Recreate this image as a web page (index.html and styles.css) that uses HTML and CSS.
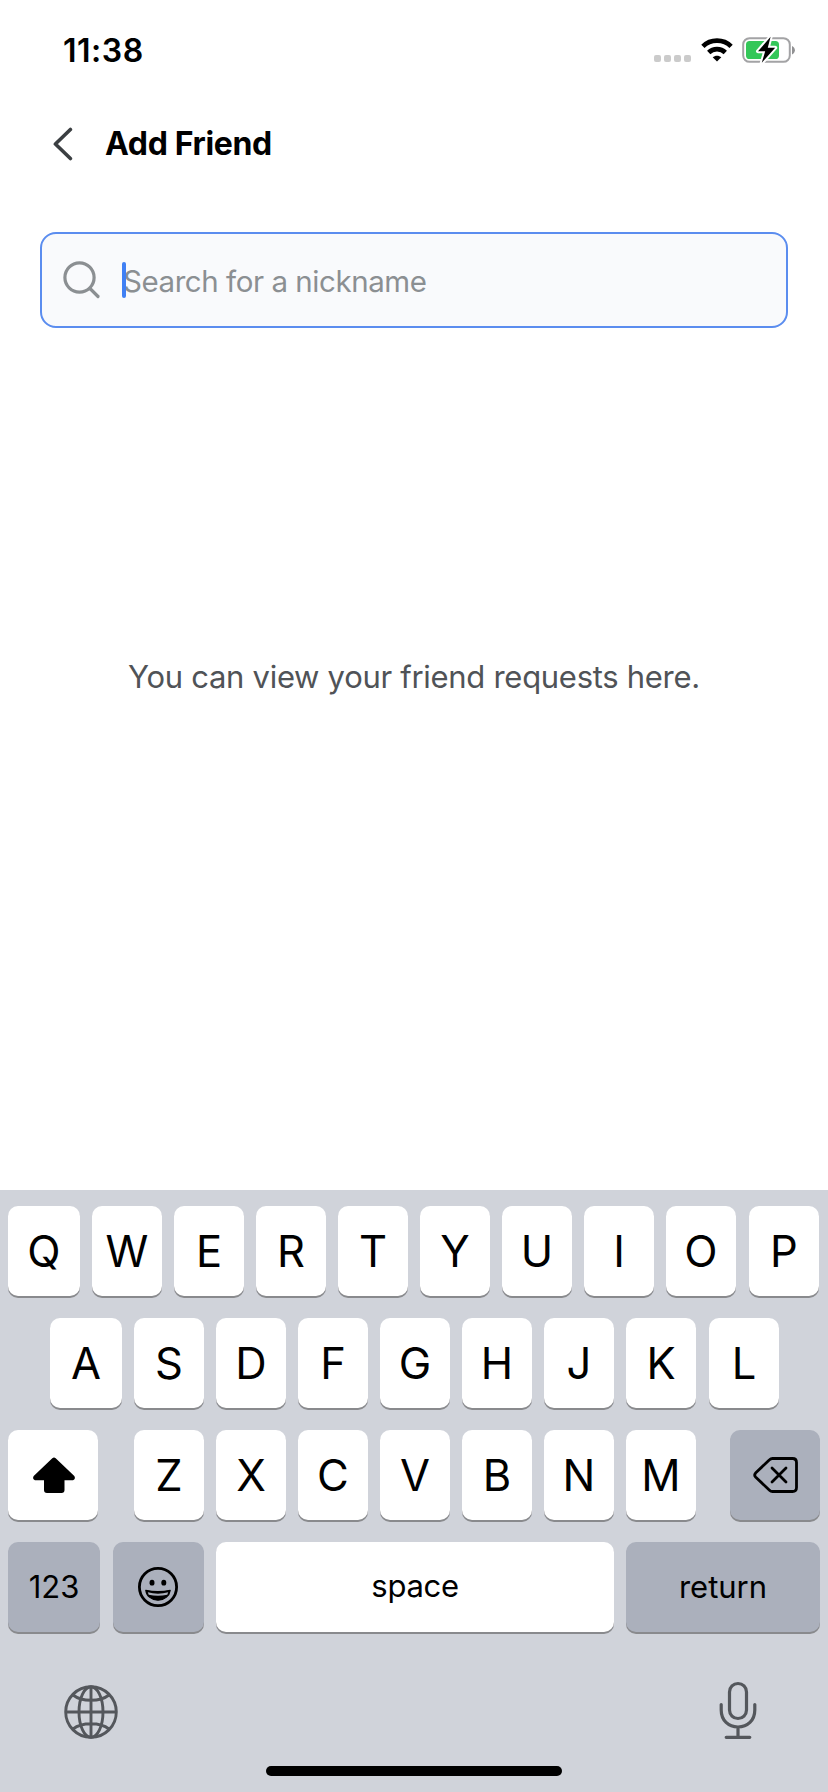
FILE: index.html
```html
<!DOCTYPE html>
<html lang="en">
<head>
<meta charset="utf-8">
<title>Add Friend</title>
<link rel="stylesheet" href="styles.css">
</head>
<body>
<div class="screen">
  <header class="status">
    <span class="time">11:38</span>
    <div class="indicators">
      <div class="signal"><i></i><i></i><i></i><i></i></div>
      <svg class="wifi" width="32" height="24" viewBox="0 0 32 24">
        <g fill="none" stroke="#000" stroke-width="4.6">
          <path d="M1.9 8.4C9.5 0.7 22.5 0.7 30.1 8.4"/>
          <path d="M7.7 14.5C12.2 10 19.8 10 24.3 14.5"/>
        </g>
        <path d="M16 23.6L11.7 19.3C14 17.1 18 17.1 20.3 19.3Z"/>
      </svg>
      <svg class="battery" width="54" height="30" viewBox="0 0 54 30">
        <rect x="1.2" y="3.2" width="46.6" height="23.6" rx="6.4" fill="none" stroke="#a3a3a5" stroke-width="2"/>
        <path d="M50 11v8.4c1.8-.7 2.9-2.400 2.900-4.200S51.800 11.700 50 11z" fill="#919193"/>
        <rect x="4" y="6" width="33" height="18" rx="3.600" fill="#34c759"/>
        <path d="M28.600 1.800L16 16.300h7.200l-3.400 11.500L33.200 12.700h-7.400z" fill="#000" stroke="#fff" stroke-width="4" stroke-linejoin="round" paint-order="stroke"/>
      </svg>
    </div>
  </header>
  <nav class="topbar">
    <svg class="back" width="20" height="34" viewBox="0 0 20 34" fill="none" stroke="#3b3f42" stroke-width="3.600" stroke-linecap="round" stroke-linejoin="round"><path d="M17.400 2.500L2.400 17L17.400 31.500"/></svg>
    <h1 class="title">Add Friend</h1>
  </nav>
  <div class="search">
    <svg class="lens" width="38" height="38" viewBox="0 0 38 38" fill="none" stroke="#8b8f92" stroke-width="3.200" stroke-linecap="round"><circle cx="16.500" cy="16.500" r="14.600"/><path d="M27.500 28L35 35.500"/></svg>
    <span class="placeholder">Search for a nickname</span>
    <span class="caret"></span>
  </div>
  <main class="empty">You can view your friend requests here.</main>
  <section class="keyboard">
    <div class="row row-1">
      <span class="key">Q</span><span class="key">W</span><span class="key">E</span><span class="key">R</span><span class="key">T</span><span class="key">Y</span><span class="key">U</span><span class="key">I</span><span class="key">O</span><span class="key">P</span>
    </div>
    <div class="row row-2">
      <span class="key">A</span><span class="key">S</span><span class="key">D</span><span class="key">F</span><span class="key">G</span><span class="key">H</span><span class="key">J</span><span class="key">K</span><span class="key">L</span>
    </div>
    <div class="row row-3">
      <span class="key shift"><svg width="44" height="38" viewBox="0 0 44 38"><path d="M20.300 2.300Q22 .8 23.700 2.300L42.300 20Q44 22.700 41 24.300H32.500V34Q32.500 37 29.500 37H15Q12 37 12 34V24.300H3Q0 22.700 1.700 20Z"/></svg></span>
      <span class="key">Z</span><span class="key">X</span><span class="key">C</span><span class="key">V</span><span class="key">B</span><span class="key">N</span><span class="key">M</span>
      <span class="key gray delete"><svg width="46" height="38" viewBox="0 0 46 38" fill="none" stroke="#000" stroke-width="2.800" stroke-linecap="round" stroke-linejoin="round"><path d="M19.500 2.500H39.500Q43.500 2.500 43.500 6.500V31.500Q43.500 35.500 39.500 35.500H19.500Q17.800 35.500 16.500 34.200L2.800 21.300Q.6 19 2.800 16.700L16.500 3.800Q17.800 2.500 19.500 2.500Z"/><path d="M19 12L33 26M33 12L19 26"/></svg></span>
    </div>
    <div class="row row-4">
      <span class="key gray text num">123</span>
      <span class="key gray emoji"><svg width="42" height="42" viewBox="0 0 42 42"><circle cx="21" cy="21" r="18.600" fill="none" stroke="#000" stroke-width="2.800"/><ellipse cx="15" cy="16.700" rx="2.500" ry="2.900"/><ellipse cx="26.800" cy="16.700" rx="2.500" ry="2.900"/><path d="M8.800 24.300Q21 27 33.200 24.300C32.400 30 27.400 34.200 21 34.200S9.600 30 8.800 24.300Z" stroke="#000" stroke-width="1.200" stroke-linejoin="round"/><path d="M10.800 26.300Q21 29 31.200 26.300L30.300 28.700Q21 31 11.700 28.700Z" fill="#abb0bc"/></svg></span>
      <span class="key text space">space</span>
      <span class="key gray text return">return</span>
    </div>
    <div class="bottom">
      <svg class="globe" width="54" height="54" viewBox="0 0 54 54" fill="none" stroke="#54575c" stroke-width="2.900"><circle cx="27" cy="27" r="25.300"/><ellipse cx="27" cy="27" rx="12" ry="25.300"/><path d="M27 1.500V52.500M1.500 27H52.500M9 10C18 17 36 17 45 10M9 44C18 37 36 37 45 44"/></svg>
      <svg class="mic" width="38" height="58" viewBox="0 0 38 58" fill="none" stroke="#54575c" stroke-width="3.200" stroke-linecap="round"><rect x="10.500" y="2.500" width="17" height="35" rx="8.500"/><path d="M2.200 23.500V29C2.200 39.500 9.500 46 19 46S35.800 39.500 35.800 29V23.500M19 46.500V55M7.200 56.300H30.800"/></svg>
    </div>
    <div class="home"></div>
  </section>
</div>
</body>
</html>
```
FILE: styles.css
```css
* { box-sizing: border-box; }
body { margin: 0; background: #fff; font-family: Inter, "Liberation Sans", sans-serif; color: #000; }
.screen { width: 828px; height: 1792px; display: flex; flex-direction: column; overflow: hidden; }
svg { display: block; flex: none; }

.status { height: 99px; padding: 0 32px 0 63px; display: flex; justify-content: space-between; align-items: center; }
.time { padding-top: 2px; font-size: 32px; font-weight: 600; line-height: 40px; letter-spacing: 0.5px; }
.indicators { display: flex; align-items: center; }
.signal { display: flex; gap: 3px; margin: 17px 10px 0 0; }
.signal i { width: 7px; height: 7px; border-radius: 2px; background: #cbcbcb; }
.wifi { margin-right: 9px; }

.topbar { height: 89px; padding-left: 53px; display: flex; align-items: center; }
.title { margin: 0 0 0 32px; padding-top: 1px; font-size: 32px; font-weight: 700; line-height: 40px; letter-spacing: -0.35px; }

.search { position: relative; height: 96px; margin: 44px 40px 0; padding-left: 21px; display: flex; align-items: center; border: 2px solid #5b8def; border-radius: 16px; background: #f9fafc; }
.placeholder { margin-left: 22px; padding-top: 1px; font-size: 29.5px; line-height: 40px; letter-spacing: -0.45px; color: #8b8f92; }
.caret { position: absolute; left: 80px; top: 28px; width: 4px; height: 36px; border-radius: 2px; background: #4080f4; }

.empty { flex: 1; padding-top: 329px; text-align: center; font-size: 31px; line-height: 40px; letter-spacing: -0.29px; color: #505357; }

.keyboard { height: 602px; padding: 16px 8px 0; background: #d0d3da; }
.row { display: flex; gap: 12px; height: 90px; margin-bottom: 22px; }
.row-2 { padding-left: 42px; }
.key { width: 70px; flex: none; display: flex; align-items: center; justify-content: center; border-radius: 10px; background: #fff; box-shadow: 0 2px 0 #898a8d; font-size: 43.5px; line-height: 54px; }
.row-1 .key:first-child, .row-2 .key:first-child { width: 72px; }
.row-1 .key:last-child, .row-2 .key:last-child { margin-left: 1px; }
.row .shift { width: 90px; margin-right: 24px; padding-left: 2px; }
.row .delete { width: 90px; margin-left: 22px; padding-left: 1px; }
.gray { background: #abb0bc; }
.text { font-size: 31px; line-height: 40px; }
.num { width: 92px; }
.emoji { width: 91px; margin-left: 1px; padding-right: 1px; }
.space { width: 398px; padding-bottom: 3px; letter-spacing: -0.3px; }
.return { width: 194px; }
.bottom { display: flex; justify-content: space-between; padding: 27px 63px 0 56px; height: 113px; }
.bottom .globe { margin-top: 4px; }
.home { width: 296px; height: 10px; margin: -1px auto 0; border-radius: 5px; background: #000; }
```
